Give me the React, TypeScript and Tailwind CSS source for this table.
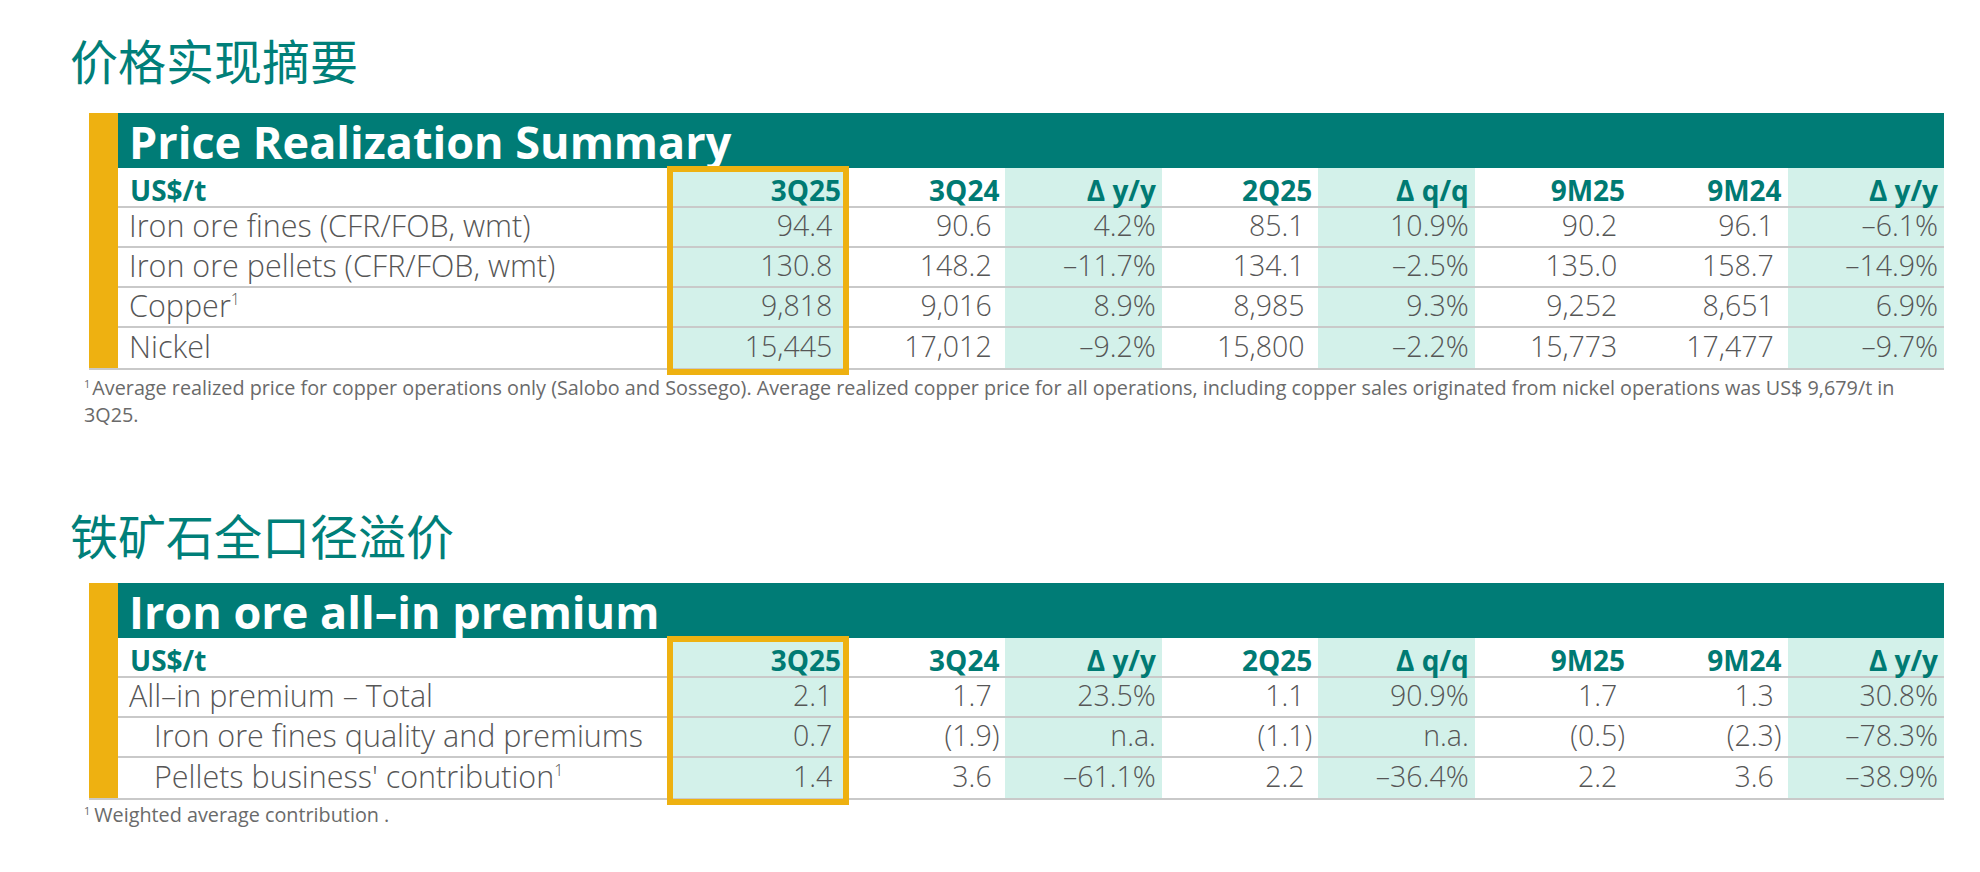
import React from "react";

type Row = {
  label: React.ReactNode;
  values: string[];
  indent?: boolean;
};

const columns = ["3Q25", "3Q24", "Δ y/y", "2Q25", "Δ q/q", "9M25", "9M24", "Δ y/y"];
const shaded = [true, false, true, false, true, false, false, true];

const priceRows: Row[] = [
  { label: "Iron ore fines (CFR/FOB, wmt)", values: ["94.4", "90.6", "4.2%", "85.1", "10.9%", "90.2", "96.1", "–6.1%"] },
  { label: "Iron ore pellets (CFR/FOB, wmt)", values: ["130.8", "148.2", "–11.7%", "134.1", "–2.5%", "135.0", "158.7", "–14.9%"] },
  {
    label: (
      <>
        Copper<sup className="-top-[0.75em] text-[16px]">1</sup>
      </>
    ),
    values: ["9,818", "9,016", "8.9%", "8,985", "9.3%", "9,252", "8,651", "6.9%"],
  },
  { label: "Nickel", values: ["15,445", "17,012", "–9.2%", "15,800", "–2.2%", "15,773", "17,477", "–9.7%"] },
];

const premiumRows: Row[] = [
  { label: "All–in premium – Total", values: ["2.1", "1.7", "23.5%", "1.1", "90.9%", "1.7", "1.3", "30.8%"] },
  { label: "Iron ore fines quality and premiums", indent: true, values: ["0.7", "(1.9)", "n.a.", "(1.1)", "n.a.", "(0.5)", "(2.3)", "–78.3%"] },
  {
    label: (
      <>
        Pellets business' contribution<sup className="-top-[0.75em] text-[16px]">1</sup>
      </>
    ),
    indent: true,
    values: ["1.4", "3.6", "–61.1%", "2.2", "–36.4%", "2.2", "3.6", "–38.9%"],
  },
];

// plain numbers keep room for a closing bracket, like the accounting format
function Value({ v }: { v: string }) {
  const needsPad = !v.endsWith("%") && !v.endsWith(")") && v !== "n.a.";
  return (
    <>
      {v}
      {needsPad && <span className="invisible">)</span>}
    </>
  );
}

function DataTable({ title, rows }: { title: string; rows: Row[] }) {
  return (
    <div className="relative ml-[89px] flex w-[1855px] border-b-2 border-[#c9c9c9]">
      <div className="w-[29px] shrink-0 bg-[#eeb111]" />
      <div className="flex-1">
        <div className="h-[55px] bg-[#007c76] pl-[11px] pt-[6px] text-[45px] font-bold leading-none whitespace-nowrap text-white">
          {title}
        </div>
        <div className="grid grid-cols-[549px_182px_repeat(7,1fr)]">
          <div className="flex h-[40px] items-end border-b-2 border-[#c9c9c9] pb-[2px] pl-[12px] text-[28px] font-bold leading-none text-[#007a73]">
            US$/t
          </div>
          {columns.map((c, i) => (
            <div
              key={"h" + i}
              className={`flex h-[40px] items-end justify-end border-b-2 border-[#c9c9c9] pb-[2px] text-[28px] font-bold leading-none whitespace-nowrap text-[#007a73] ${
                shaded[i] ? "bg-[#d3f1ea]" : ""
              } ${i === 0 ? "pr-[8px]" : "pr-[6px]"}`}
            >
              {c}
            </div>
          ))}
          {rows.map((row, r) => (
            <React.Fragment key={r}>
              <div
                className={`flex h-[40px] items-center whitespace-nowrap pb-[4px] text-[30.5px] font-light leading-none text-[#565656] ${
                  r < rows.length - 1 ? "border-b-2 border-[#c9c9c9]" : ""
                } ${row.indent ? "pl-[36px]" : "pl-[11px]"}`}
              >
                <span>{row.label}</span>
              </div>
              {row.values.map((v, i) => (
                <div
                  key={i}
                  className={`flex h-[40px] items-center justify-end pb-[3px] text-[28.5px] font-light leading-none text-[#565656] ${
                    r < rows.length - 1 ? "border-b-2 border-[#c9c9c9]" : ""
                  } ${shaded[i] ? "bg-[#d3f1ea]" : ""} ${i === 0 ? "pr-[9px]" : "pr-[6px]"}`}
                >
                  <span>
                    <Value v={v} />
                  </span>
                </div>
              ))}
            </React.Fragment>
          ))}
        </div>
      </div>
      {/* highlight round the current quarter */}
      <div className="pointer-events-none absolute top-[53px] -bottom-[7px] left-[578px] w-[182px] border-[6px] border-[#eeb111]" />
    </div>
  );
}

export default function App() {
  return (
    <div className="min-h-[872px] w-[1980px] bg-white pt-[35px] font-['Open_Sans',sans-serif]">
      <h1 className="ml-[70px] text-[48px] font-normal leading-none text-[#007f79] font-['Noto_Sans_CJK_SC',sans-serif]">
        价格实现摘要
      </h1>
      <div className="mt-[30px]">
        <DataTable title="Price Realization Summary" rows={priceRows} />
      </div>
      <p className="ml-[84px] mt-[4px] text-[19.8px] leading-[27px] text-[#6a6a6a]">
        <sup className="-top-[0.6em] mr-[2px] text-[11px]">1</sup>
        Average realized price for copper operations only (Salobo and Sossego). Average realized copper price for all
        operations, including copper sales originated from nickel operations was US$ 9,679/t in
        <br />
        3Q25.
      </p>
      <h1 className="ml-[70px] mt-[82px] text-[48px] font-normal leading-none text-[#007f79] font-['Noto_Sans_CJK_SC',sans-serif]">
        铁矿石全口径溢价
      </h1>
      <div className="mt-[25px]">
        <DataTable title="Iron ore all–in premium" rows={premiumRows} />
      </div>
      <p className="ml-[84px] mt-[1px] text-[19.8px] leading-[27px] text-[#6a6a6a]">
        <sup className="-top-[0.6em] mr-[4px] text-[11px]">1</sup>Weighted average contribution .
      </p>
    </div>
  );
}
